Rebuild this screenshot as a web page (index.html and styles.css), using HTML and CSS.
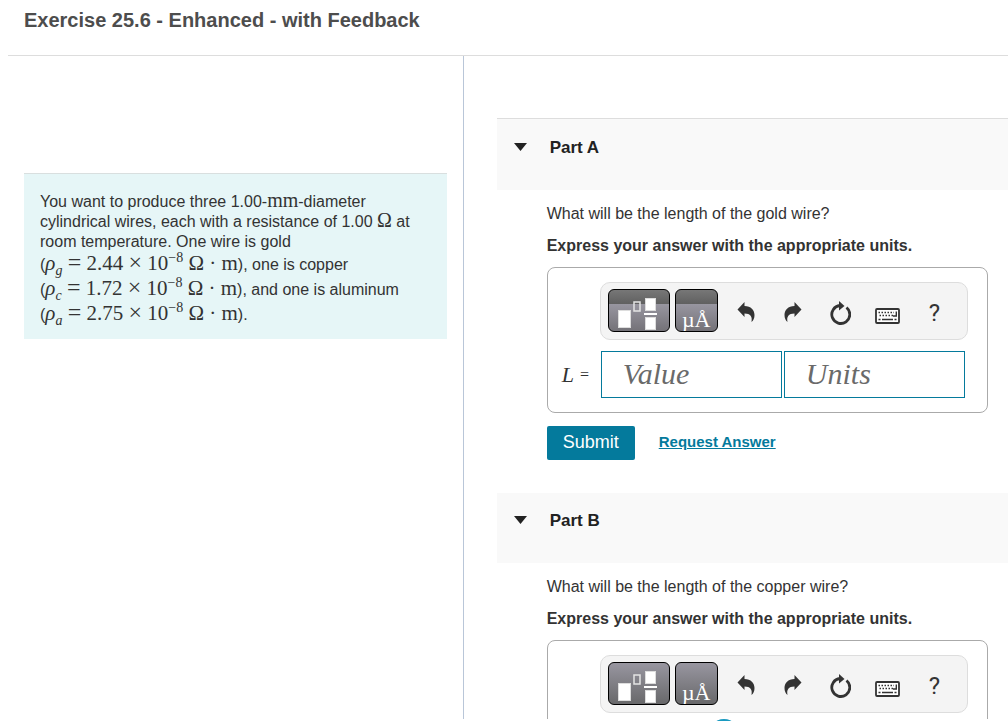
FILE: index.html
```
<!DOCTYPE html>
<html lang="en">
<head>
    <meta charset="UTF-8">
    <meta name="viewport" content="width=device-width, initial-scale=1.0">
    <title>Exercise 25.6 - Enhanced - with Feedback</title>
    <link rel="stylesheet" href="styles.css">
</head>
<body>
    <!-- Shared toolbar icons -->
    <svg class="icon-defs" aria-hidden="true">
        <symbol id="icon-template" viewBox="0 0 60 41">
            <rect x="9.5" y="20.500" width="12" height="17" fill="#fff" stroke="#ddd"/>
            <rect x="25" y="12" width="6" height="9" fill="none" stroke="#e4e4e4" stroke-width="1.500"/>
            <rect x="36.500" y="8.500" width="10" height="12" fill="#fff" stroke="#ddd"/>
            <rect x="35" y="23" width="13" height="2" fill="#fff"/>
            <rect x="36.500" y="27.500" width="10" height="12" fill="#fff" stroke="#ddd"/>
        </symbol>
        <symbol id="icon-undo" viewBox="0 0 18 20">
            <path d="M0.500 7.500 L7.500 0 V4 C14 4 17.500 8 17.500 13 C17.500 16 16.500 18.500 14.500 20 C15.500 14.500 13.500 11.500 7.500 11.500 V15 Z"/>
        </symbol>
        <symbol id="icon-reset" viewBox="0 0 22 24">
            <path d="M17.500 6.500 A9 9 0 1 1 11 4.500" fill="none" stroke="#333" stroke-width="2.800"/>
            <path d="M10 0 L15.500 5 L10 9.500 Z"/>
        </symbol>
        <symbol id="icon-keyboard" viewBox="0 0 25 16">
            <rect x="1" y="1" width="23" height="14" rx="1" fill="#fff" stroke="#333" stroke-width="1.800"/>
            <path d="M3.500 4.500 H19 M4.500 7.500 H19" fill="none" stroke="#333" stroke-width="1.500" stroke-dasharray="1.500 1.500"/>
            <path d="M3.500 11.500 H5.500 M7 11.500 H18 M19.500 11.500 H21.500 M18 8 H21.300 V3.500" fill="none" stroke="#333" stroke-width="1.400"/>
        </symbol>
    </svg>

    <header class="page-header">
        <h1>Exercise 25.6 - Enhanced - with Feedback</h1>
    </header>

    <main class="layout">
        <section class="problem-pane">
            <div class="problem-text">
                <p>You want to produce three 1.00-<span class="math">mm</span>-diameter cylindrical wires, each with a resistance of 1.00 <span class="math">Ω</span> at room temperature. One wire is gold</p>
                <p class="equation">(<span class="math"><i>ρ</i><sub>g</sub> <span class="rel">=</span> 2.44 <span class="rel">×</span> 10<sup>−8</sup> Ω · m</span>), one is copper</p>
                <p class="equation">(<span class="math"><i>ρ</i><sub>c</sub> <span class="rel">=</span> 1.72 <span class="rel">×</span> 10<sup>−8</sup> Ω · m</span>), and one is aluminum</p>
                <p class="equation">(<span class="math"><i>ρ</i><sub>a</sub> <span class="rel">=</span> 2.75 <span class="rel">×</span> 10<sup>−8</sup> Ω · m</span>).</p>
            </div>
        </section>

        <section class="parts-pane">
            <article class="part">
                <h2 class="part-header">
                    <svg class="caret" viewBox="0 0 13 8"><path d="M0 0 H13 L6.500 8 Z"/></svg>
                    Part A
                </h2>
                <div class="part-body">
                    <p>What will be the length of the gold wire?</p>
                    <p class="instructions">Express your answer with the appropriate units.</p>
                    <div class="answer-box">
                        <div class="toolbar">
                            <button class="palette palette-wide palette-banded" aria-label="Templates"><svg><use href="#icon-template"/></svg></button>
                            <button class="palette palette-banded" aria-label="Symbols">µÅ</button>
                            <button class="tool" aria-label="Undo"><svg class="arrow"><use href="#icon-undo"/></svg></button>
                            <button class="tool" aria-label="Redo"><svg class="arrow flipped"><use href="#icon-undo"/></svg></button>
                            <button class="tool" aria-label="Reset"><svg class="reset"><use href="#icon-reset"/></svg></button>
                            <button class="tool" aria-label="Keyboard shortcuts"><svg class="keyboard"><use href="#icon-keyboard"/></svg></button>
                            <button class="tool help" aria-label="Help">?</button>
                        </div>
                        <div class="answer-row">
                            <label for="length-value"><i>L</i> <span>=</span></label>
                            <input id="length-value" type="text" placeholder="Value">
                            <input type="text" placeholder="Units" aria-label="Units">
                        </div>
                    </div>
                    <div class="actions">
                        <button class="submit-button">Submit</button>
                        <a class="request-link" href="#">Request Answer</a>
                    </div>
                </div>
            </article>

            <article class="part">
                <h2 class="part-header">
                    <svg class="caret" viewBox="0 0 13 8"><path d="M0 0 H13 L6.500 8 Z"/></svg>
                    Part B
                </h2>
                <div class="part-body">
                    <p>What will be the length of the copper wire?</p>
                    <p class="instructions">Express your answer with the appropriate units.</p>
                    <div class="answer-box">
                        <div class="toolbar">
                            <button class="palette palette-wide" aria-label="Templates"><svg><use href="#icon-template"/></svg></button>
                            <button class="palette" aria-label="Symbols">µÅ</button>
                            <button class="tool" aria-label="Undo"><svg class="arrow"><use href="#icon-undo"/></svg></button>
                            <button class="tool" aria-label="Redo"><svg class="arrow flipped"><use href="#icon-undo"/></svg></button>
                            <button class="tool" aria-label="Reset"><svg class="reset"><use href="#icon-reset"/></svg></button>
                            <button class="tool" aria-label="Keyboard shortcuts"><svg class="keyboard"><use href="#icon-keyboard"/></svg></button>
                            <button class="tool help" aria-label="Help">?</button>
                        </div>
                    </div>
                </div>
            </article>
        </section>
    </main>
    <div class="loader"></div>
</body>
</html>
```
FILE: styles.css
```
* {
    margin: 0;
    padding: 0;
    box-sizing: border-box;
}

body {
    display: flex;
    flex-direction: column;
    height: 100vh;
    padding-bottom: 2px;
    overflow: hidden;
    background-color: #fff;
    color: #333;
    font-family: "Liberation Sans", Arial, sans-serif;
    font-size: 16px;
    line-height: 20px;
}

button {
    font-family: inherit;
    cursor: pointer;
}

.icon-defs {
    display: none;
}

.page-header {
    margin-left: 8px;
    padding: 8px 16px 23px;
    border-bottom: 1px solid #ddd;
}

.page-header h1 {
    font-size: 20px;
    line-height: 24px;
    color: #4d4d4d;
}

.layout {
    display: flex;
    flex: 1;
    min-height: 0;
    overflow: hidden;
}

/* Problem statement */
.problem-pane {
    flex: none;
    width: 46%;
    padding: 117px 16px 0 24px;
    border-right: 1px solid #b9c6d8;
}

.problem-text {
    padding: 18px 16px 12px;
    border-top: 1px solid #d9dfdf;
    background-color: #e6f6f7;
}

.math {
    font-family: "Liberation Serif", "Times New Roman", serif;
    font-size: 20px;
    line-height: 1px;
}

.equation {
    line-height: 25px;
    white-space: nowrap;
}

.equation .math {
    font-size: 21px;
}

.equation sub,
.equation sup {
    font-size: 14px;
    line-height: 1px;
}

.equation sub {
    font-style: italic;
}

.equation .rel {
    font-size: 24px;
}

/* Parts */
.parts-pane {
    flex: 1;
    min-width: 0;
    padding: 62px 0 0 33px;
}

.part + .part {
    margin-top: 33px;
}

.part-header {
    display: flex;
    align-items: flex-start;
    height: 72px;
    padding: 19px 17px;
    border-top: 1px solid #ddd;
    background-color: #f9f9f9;
    color: #222;
    font-size: 17px;
}

.part + .part .part-header {
    height: 70px;
    padding-top: 18px;
    border-top: none;
}

.caret {
    width: 13px;
    height: 8px;
    margin: 5px 23px 0 0;
    fill: #222;
}

.part-body {
    padding: 14px 20px 0 50px;
}

.instructions {
    margin-top: 12px;
    font-weight: bold;
}

.answer-box {
    margin-top: 11px;
    padding: 14px 22px 14px 14px;
    border: 1px solid #aaa;
    border-radius: 8px;
}

.toolbar {
    display: flex;
    align-items: flex-start;
    height: 58px;
    margin: 0 -3px 0 38px;
    padding: 6px 9px 0 7px;
    border: 1px solid #ddd;
    border-radius: 10px;
    background-color: #f4f4f4;
}

.palette {
    width: 43px;
    height: 43px;
    margin-right: 5px;
    border: 1px solid #000;
    border-radius: 6px;
    background: linear-gradient(#9896a0, #68686a);
    color: #fff;
    font-family: "Liberation Serif", "Times New Roman", serif;
    font-size: 22px;
    line-height: 24px;
    padding-top: 18px;
    overflow: hidden;
}

.palette-wide {
    width: 62px;
    padding: 0;
}

.palette-wide svg {
    display: block;
    width: 60px;
    height: 41px;
}

.palette-banded {
    background: linear-gradient(#777 0, #606060 14px, #9896a0 14px, #747278 100%);
}

.tool {
    display: flex;
    flex: 1;
    align-items: center;
    justify-content: center;
    height: 44px;
    border: none;
    background: none;
    color: #333;
}

.tool svg {
    fill: #333;
}

.arrow {
    width: 18px;
    height: 20px;
    margin-top: 2px;
}

.flipped {
    transform: scaleX(-1);
}

.reset {
    width: 22px;
    height: 24px;
    margin-top: 3px;
}

.keyboard {
    width: 25px;
    height: 16px;
    margin-top: 9px;
}

.help {
    padding-top: 3px;
    font-family: Roboto, "Liberation Sans", sans-serif;
    font-size: 24px;
}

.answer-row {
    display: flex;
    gap: 2px;
    margin-top: 11px;
}

.answer-row label {
    display: flex;
    align-items: center;
    gap: 6px;
    width: 37px;
    font-family: "Liberation Serif", "Times New Roman", serif;
    font-size: 22px;
}

.answer-row label span {
    font-size: 16px;
}

.answer-row input {
    flex: 1;
    min-width: 0;
    height: 47px;
    padding: 0 21px 2px;
    border: 1px solid #047a9c;
    color: #333;
    font-family: "Liberation Serif", "Times New Roman", serif;
    font-size: 30px;
    font-style: italic;
}

.answer-row input::placeholder {
    color: #6a6a6a;
}

.actions {
    display: flex;
    align-items: center;
    gap: 24px;
    margin-top: 13px;
}

.submit-button {
    height: 34px;
    padding: 0 16px 2px;
    border: none;
    border-radius: 2px;
    background-color: #047a9c;
    color: #fff;
    font-size: 18px;
}

.request-link {
    padding-bottom: 2px;
    color: #047a9c;
    font-size: 15px;
    font-weight: bold;
}

/* Loading ring rising from the bottom edge */
.loader {
    position: fixed;
    left: 708px;
    bottom: -30px;
    width: 32px;
    height: 32px;
    border: 4px solid #1a9ac0;
    border-radius: 50%;
}
```
